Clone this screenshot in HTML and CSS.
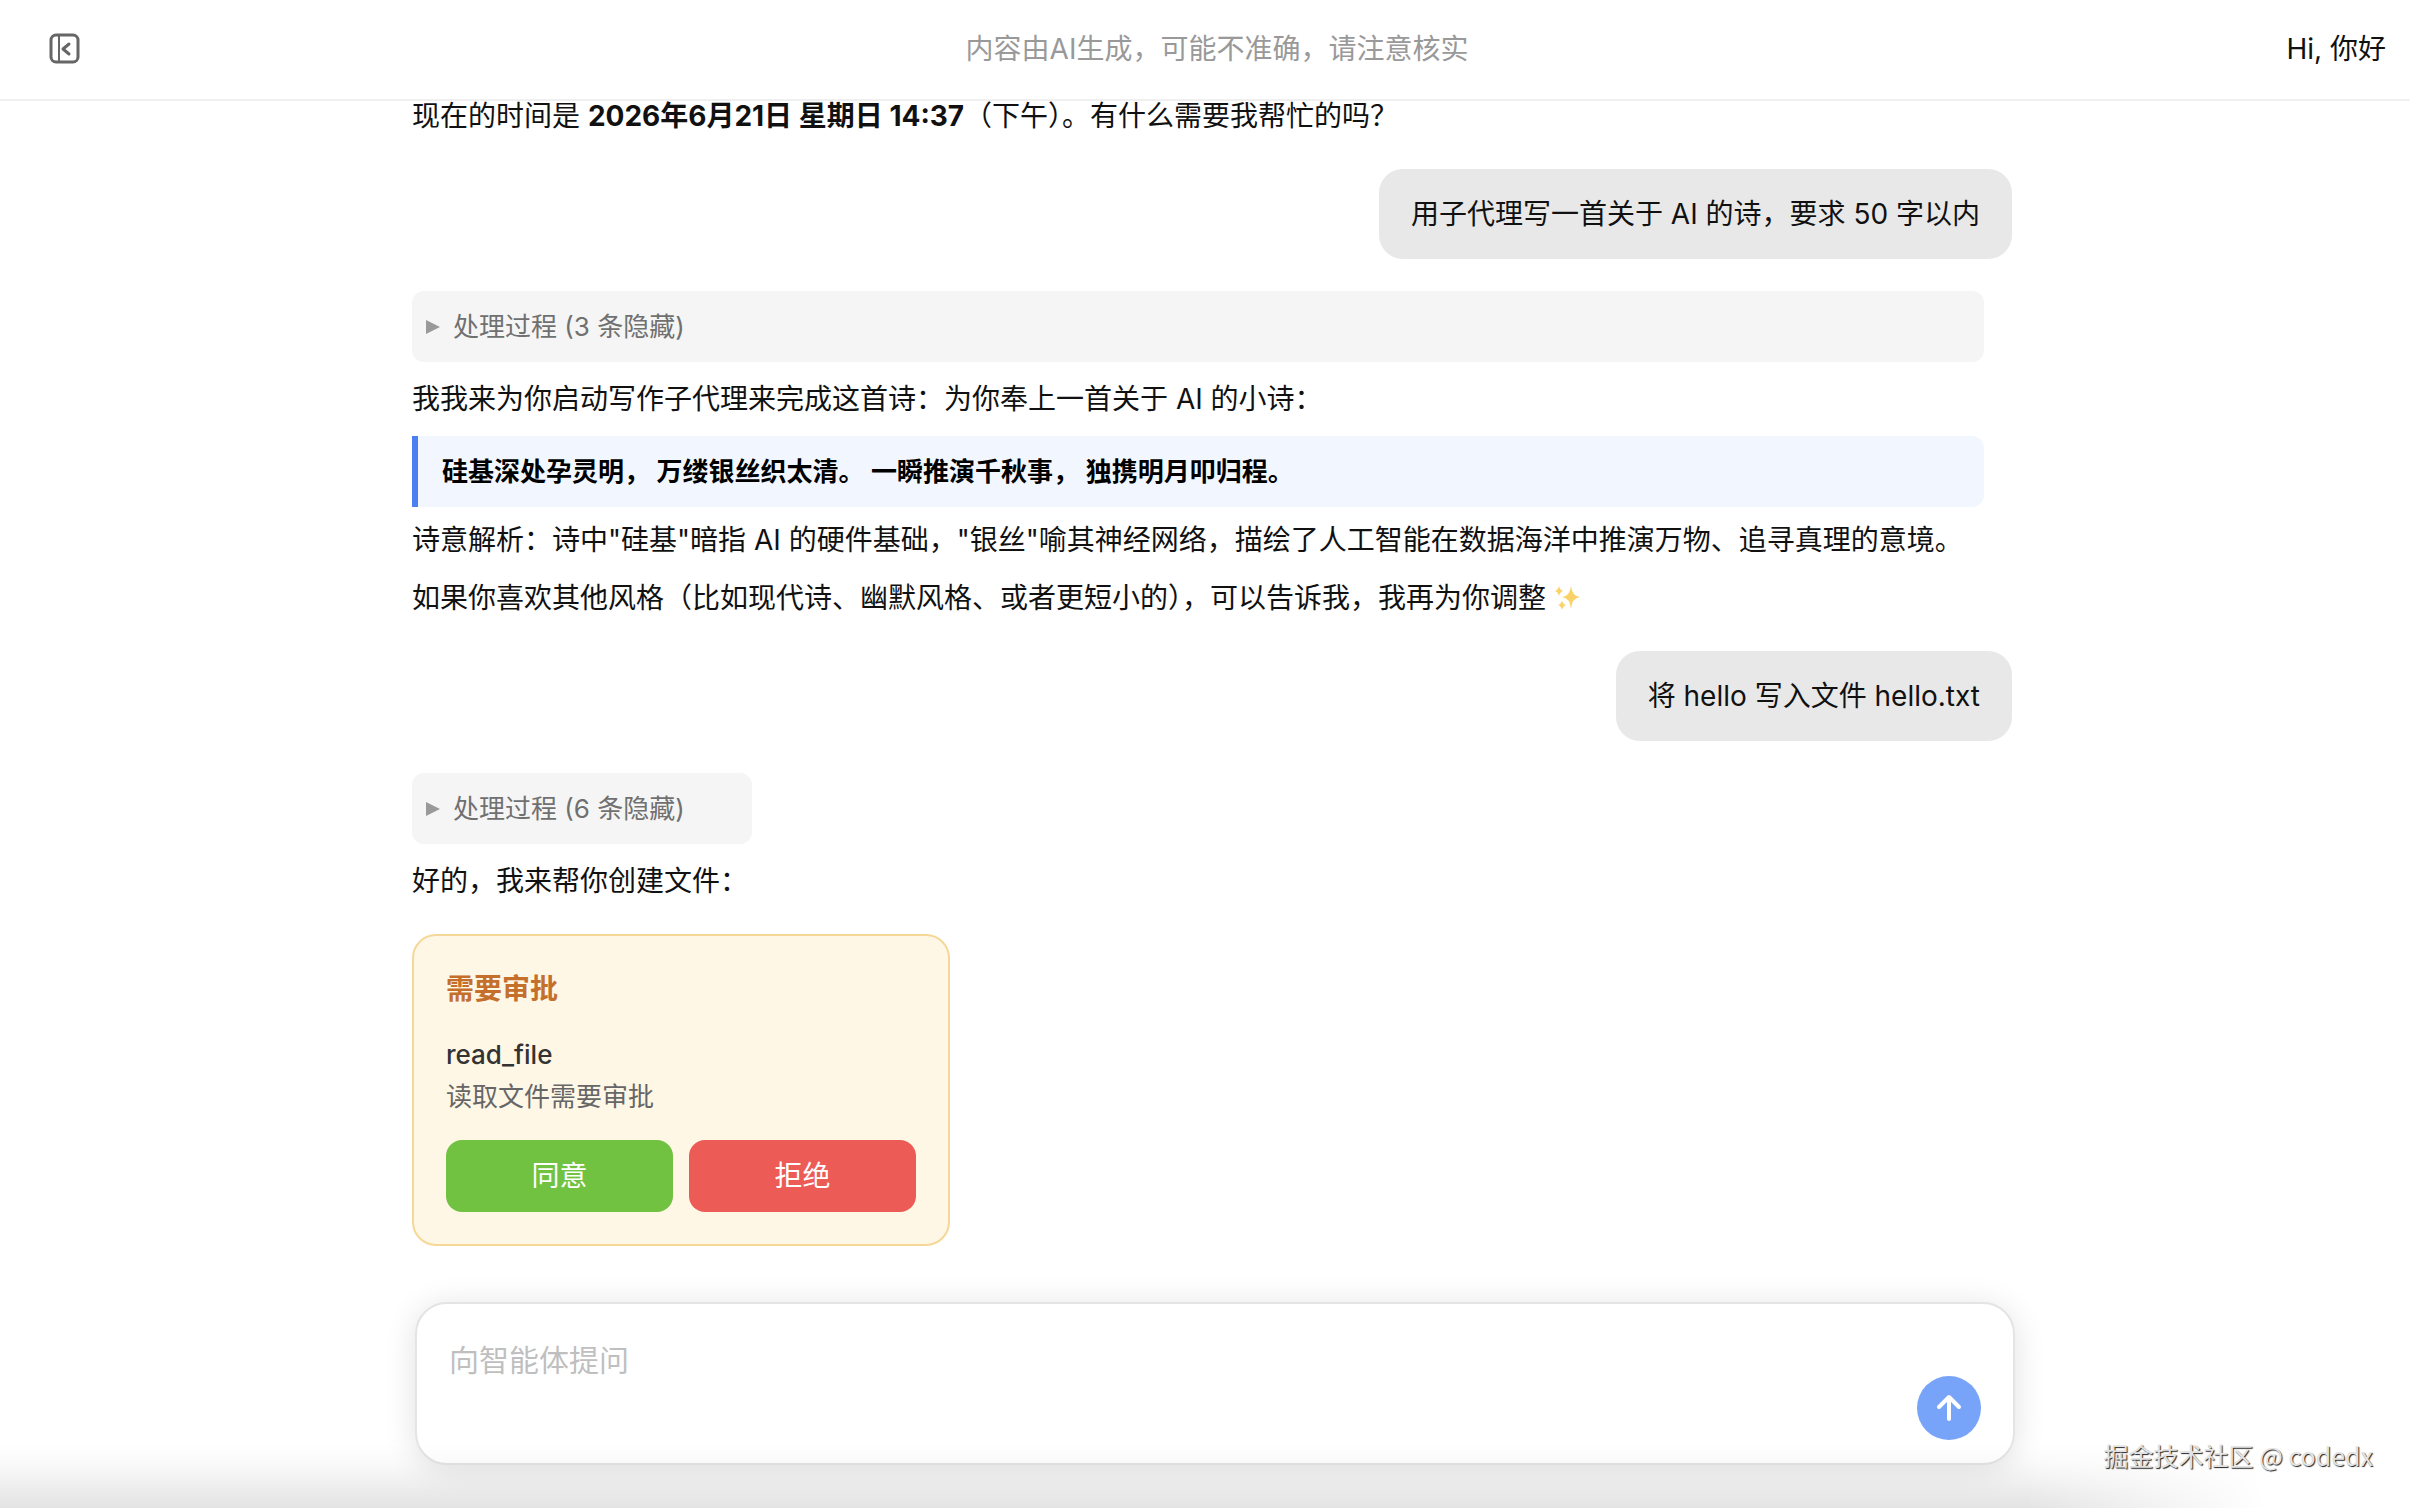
FILE: index.html
```
<!DOCTYPE html>
<html lang="zh-CN">
<head>
    <meta charset="UTF-8">
    <meta name="viewport" content="width=device-width, initial-scale=1.0">
    <title>智能体对话</title>
    <link rel="stylesheet" href="styles.css">
</head>
<body>

<header class="topbar">
    <button class="toggle" type="button" aria-label="收起侧边栏">
        <svg viewBox="0 0 32 32" width="32" height="32" fill="none" stroke="#666" stroke-width="3" stroke-linecap="round" stroke-linejoin="round">
            <rect x="3" y="2" width="27" height="27" rx="5"/>
            <path d="M11 2v27" stroke-width="2"/>
            <path d="M21 11l-6 5 6 5" stroke-width="3"/>
        </svg>
    </button>
    <p class="notice">内容由AI生成，可能不准确，请注意核实</p>
    <p class="greeting">Hi, 你好</p>
</header>

<main class="chat">
    <div class="messages">
        <div class="msg">
            <p>现在的时间是 <strong>2026年6月21日 星期日 14:37</strong>（下午）。有什么需要我帮忙的吗？</p>
        </div>

        <div class="msg-user">用子代理写一首关于 AI 的诗，要求 50 字以内</div>

        <div class="msg">
            <details class="process">
                <summary>处理过程 (3 条隐藏)</summary>
            </details>
            <p>我我来为你启动写作子代理来完成这首诗：为你奉上一首关于 AI 的小诗：</p>
            <blockquote>硅基深处孕灵明， 万缕银丝织太清。 一瞬推演千秋事， 独携明月叩归程。</blockquote>
            <p>诗意解析：诗中"硅基"暗指 AI 的硬件基础，"银丝"喻其神经网络，描绘了人工智能在数据海洋中推演万物、追寻真理的意境。</p>
            <p>如果你喜欢其他风格（比如现代诗、幽默风格、或者更短小的），可以告诉我，我再为你调整
                <svg class="sparkle" viewBox="0 0 28 28" width="28" height="28" fill="#f9d36a">
                    <path d="M17 3q1 10 9 11q-8 1-9 12q-1-11-9-12q8-1 9-11z"/>
                    <path d="M5 3q1 4 4 5q-3 1-4 5q-1-4-4-5q3-1 4-5z"/>
                    <path d="M8 18q1 3 4 4q-3 1-4 5q-1-4-4-5q3-1 4-4z"/>
                </svg>
            </p>
        </div>

        <div class="msg-user">将 hello 写入文件 hello.txt</div>

        <div class="msg">
            <details class="process process-short">
                <summary>处理过程 (6 条隐藏)</summary>
            </details>
            <p>好的，我来帮你创建文件：</p>

            <section class="approval">
                <h2>需要审批</h2>
                <p class="tool-name">read_file</p>
                <p class="tool-desc">读取文件需要审批</p>
                <div class="actions">
                    <button class="btn btn-agree" type="button">同意</button>
                    <button class="btn btn-reject" type="button">拒绝</button>
                </div>
            </section>
        </div>
    </div>
</main>

<footer class="footer">
    <form class="composer">
        <textarea placeholder="向智能体提问" aria-label="向智能体提问"></textarea>
        <button class="send" type="button" aria-label="发送">
            <svg viewBox="0 0 32 32" width="32" height="32" fill="none" stroke="#fff" stroke-width="4" stroke-linecap="round" stroke-linejoin="round">
                <path d="M16 27V5M6 15L16 5 26 15"/>
            </svg>
        </button>
    </form>
</footer>

<div class="watermark">掘金技术社区 @ codedx</div>

</body>
</html>
```
FILE: styles.css
```
:root {
    --text: #111;
    --muted: #999;
    --accent: #4a80f0;
    --line: #f0f0f0;
}

* { margin: 0; padding: 0; box-sizing: border-box; }

body {
    display: flex;
    flex-direction: column;
    height: 100vh;
    overflow: hidden;
    position: relative;
    background: #fff;
    color: var(--text);
    font-family: Inter, "Noto Sans CJK SC", sans-serif;
    font-size: 28px;
    line-height: 46px;
}

/* soft shade along the bottom edge, fades out to the right */
body::after {
    content: "";
    position: absolute;
    left: 0; right: 0; bottom: 0;
    height: 64px;
    background: linear-gradient(to bottom, transparent, rgba(0, 0, 0, 0.02) 30%, rgba(0, 0, 0, 0.11));
    -webkit-mask-image: linear-gradient(to right, #000 84%, transparent 94%);
    mask-image: linear-gradient(to right, #000 84%, transparent 94%);
    pointer-events: none;
}

button, textarea { font: inherit; border: none; }
button { cursor: pointer; }

/* --- Header --- */
.topbar {
    display: grid;
    grid-template-columns: 1fr auto 1fr;
    align-items: center;
    height: 101px;
    padding: 0 24px 2px 48px;
    border-bottom: 2px solid var(--line);
    background: #fff;
    flex-shrink: 0;
}

.toggle { display: flex; width: 32px; background: none; }
.notice { color: var(--muted); }
.greeting { text-align: right; }

/* --- Messages --- */
.chat {
    flex: 1;
    min-height: 0;
    overflow: hidden;
    display: flex;
    flex-direction: column;
    justify-content: flex-end;
    padding: 0 24px 56px 38px;
}

.messages {
    display: flex;
    flex-direction: column;
    gap: 30px;
    width: 100%;
    max-width: 1600px;
    margin: 0 auto;
}

.msg {
    display: flex;
    flex-direction: column;
    gap: 12px;
    padding-right: 28px;
}

.msg-user {
    align-self: flex-end;
    margin-bottom: 2px;
    padding: 22px 32px;
    border-radius: 24px;
    background: #e8e8e8;
}

.process {
    margin-bottom: 2px;
    padding: 13px 14px 12px;
    border-radius: 12px;
    background: #f5f5f5;
    color: #707070;
    font-size: 26px;
}

.process-short { width: 340px; }

.process summary {
    display: flex;
    align-items: center;
    gap: 13px;
    list-style: none;
    cursor: pointer;
}

.process summary::before {
    content: "";
    border-left: 14px solid #999;
    border-top: 7px solid transparent;
    border-bottom: 7px solid transparent;
}

blockquote {
    margin: 2px 0 -2px;
    padding: 13px 24px 12px;
    border-left: 6px solid var(--accent);
    border-radius: 0 12px 12px 0;
    background: #f2f7ff;
    color: #000;
    font-size: 26px;
    font-weight: 600;
}

.sparkle { vertical-align: -3px; }

/* --- Approval card --- */
.approval {
    width: 538px;
    margin-top: 18px;
    padding: 32px;
    border: 2px solid #f5d898;
    border-radius: 24px;
    background: #fef7e6;
    font-size: 26px;
    line-height: 42px;
}

.approval h2 {
    margin-bottom: 24px;
    color: #c46f2b;
    font-size: 28px;
    font-weight: 600;
}

.tool-name { color: #333; font-weight: 500; }
.tool-desc { color: #666; }

.actions { display: flex; gap: 16px; margin-top: 22px; }

.btn {
    flex: 1;
    height: 72px;
    border-radius: 16px;
    color: #fff;
    font-size: 28px;
}

.btn-agree { background: #70c240; }
.btn-reject { background: #ec5b56; }

/* --- Composer --- */
.footer { padding: 0 24px 43px 44px; }

.composer {
    display: flex;
    align-items: flex-end;
    gap: 24px;
    max-width: 1600px;
    height: 163px;
    margin: 0 auto;
    padding: 33px 32px 23px;
    border: 2px solid #e4e4e4;
    border-radius: 32px;
    background: #fff;
    box-shadow: 0 4px 32px rgba(0, 0, 0, 0.12);
}

.composer textarea {
    flex: 1;
    height: 100%;
    background: none;
    font-size: 30px;
    line-height: 46px;
    resize: none;
    outline: none;
}

.composer textarea::placeholder { color: #bfbfbf; }

.send {
    display: flex;
    align-items: center;
    justify-content: center;
    width: 64px;
    height: 64px;
    border-radius: 50%;
    background: #77a4f9;
}

.watermark {
    position: absolute;
    right: 37px;
    bottom: 30px;
    color: #e4e4e4;
    font-family: "Noto Sans CJK SC", sans-serif;
    font-size: 25px;
    text-shadow: 1px 1px 1px #222;
}
```
